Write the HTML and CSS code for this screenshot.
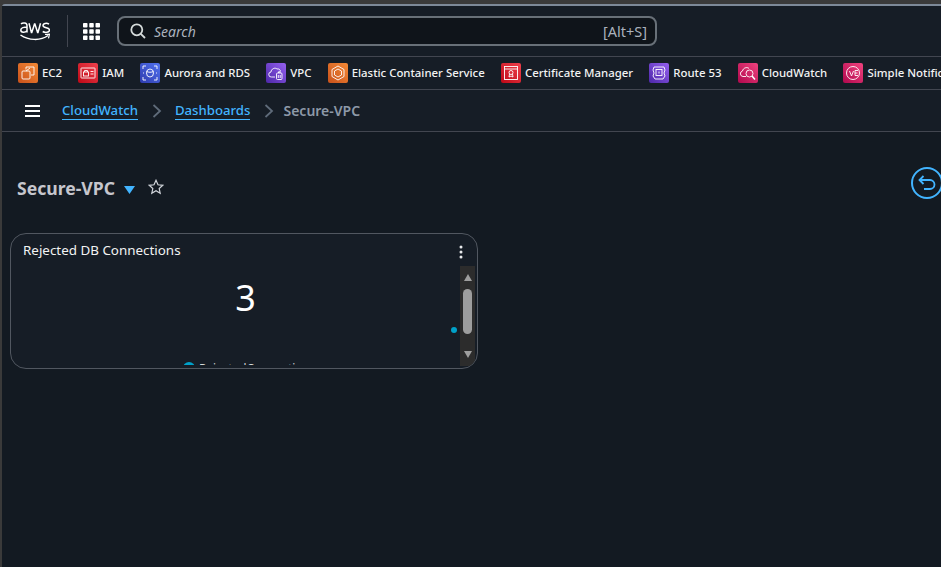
FILE: index.html
```html
<!DOCTYPE html>
<html lang="en">
<head>
    <meta charset="UTF-8">
    <meta name="viewport" content="width=device-width, initial-scale=1.0">
    <title>Secure-VPC | CloudWatch</title>
    <link rel="stylesheet" href="styles.css">
</head>
<body>
    <div class="shell">
        <header class="topbar">
            <svg class="aws-logo" width="30" height="19" viewBox="0 0 30 19" fill="none" stroke="#fff" stroke-width="1.500">
                <path d="M1 2c1.500-1.500 6-1.500 6 1.500v7M7 5.500C4 5 .8 5.500.8 8c0 3 4.500 2.800 6.200.8"/>
                <path d="M9 1.200l2.400 9.300h.4L14.500 2h.4l2.700 8.500h.4l2.500-9.300"/>
                <path d="M29 2.200C27 .8 23 1 23 3.500c0 3 6.500 1.500 6.500 4.500 0 3-4.800 2.800-6.800 1.500"/>
                <path d="M.5 13c8 5.500 20 6 27.500.5"/>
                <path d="M25 12.500l4.500-.4-1 4.300" stroke-width="1.200"/>
            </svg>
            <span class="divider"></span>
            <svg class="grid-icon" width="17" height="17" viewBox="0 0 17 17" fill="#fff">
                <rect width="4.500" height="4.500" rx=".8"/><rect x="6.250" width="4.500" height="4.500" rx=".8"/><rect x="12.500" width="4.500" height="4.500" rx=".8"/>
                <rect y="6.250" width="4.500" height="4.500" rx=".8"/><rect x="6.250" y="6.250" width="4.500" height="4.500" rx=".8"/><rect x="12.500" y="6.250" width="4.500" height="4.500" rx=".8"/>
                <rect y="12.500" width="4.500" height="4.500" rx=".8"/><rect x="6.250" y="12.500" width="4.500" height="4.500" rx=".8"/><rect x="12.500" y="12.500" width="4.500" height="4.500" rx=".8"/>
            </svg>
            <div class="search">
                <svg width="16" height="16" viewBox="0 0 16 16" fill="none" stroke="#d5dbdb" stroke-width="1.800">
                    <circle cx="6.800" cy="6.800" r="5.500"/><path d="M10.800 10.800L15 15"/>
                </svg>
                <span class="search-text">Search</span>
                <span class="search-key">[Alt+S]</span>
            </div>
        </header>

        <nav class="favorites">
            <a class="fav">
                <svg class="fav-icon orange" viewBox="0 0 20 20" fill="none" stroke="#fff" stroke-width=".9"><path d="M8 6.500V4h8v8h-3"/><rect x="4" y="8" width="8" height="8" rx="1"/><path d="M8 8l4-3"/></svg>
                EC2
            </a>
            <a class="fav">
                <svg class="fav-icon red" viewBox="0 0 20 20" fill="none" stroke="#fff" stroke-width=".9"><rect x="3" y="5" width="14" height="10" rx=".5"/><rect x="5.500" y="9" width="5" height="4"/><path d="M6.500 9V7.500h3V9M12.500 8.500h3M12.500 11h3"/></svg>
                IAM
            </a>
            <a class="fav">
                <svg class="fav-icon blue" viewBox="0 0 20 20" fill="none" stroke="#fff" stroke-width=".9"><ellipse cx="10" cy="10" rx="3.500" ry="4"/><path d="M6.500 8.500c2 1 5 1 7 0M3 3h3M3 3v3M17 3h-3M17 3v3M3 17h3M3 17v-3M17 17h-3M17 17v-3M3 10h1M16 10h1"/></svg>
                Aurora and RDS
            </a>
            <a class="fav">
                <svg class="fav-icon purple" viewBox="0 0 20 20" fill="none" stroke="#fff" stroke-width=".9"><path d="M9 14H5.500a2.500 2.500 0 0 1-.5-5c0-3 4-5 6-3 1.500-.5 3.500.5 3.500 2.500"/><rect x="10.500" y="10" width="5.500" height="6.500" rx="1"/><path d="M12.500 10V8.800h1.500V10M12.300 12v3M14.200 12v3"/></svg>
                VPC
            </a>
            <a class="fav">
                <svg class="fav-icon orange" viewBox="0 0 20 20" fill="none" stroke="#fff" stroke-width=".9"><path d="M10 3l6 3.500v7L10 17l-6-3.500v-7z"/><path d="M10 6l3.500 2v4L10 14l-3.500-2V8z"/></svg>
                Elastic Container Service
            </a>
            <a class="fav">
                <svg class="fav-icon red" viewBox="0 0 20 20" fill="none" stroke="#fff" stroke-width=".9"><rect x="3.500" y="3.500" width="13" height="13"/><path d="M3.500 6h13"/><circle cx="10" cy="9.500" r="2"/><path d="M8.500 11l-.5 3 2-1 2 1-.5-3"/></svg>
                Certificate Manager
            </a>
            <a class="fav">
                <svg class="fav-icon purple" viewBox="0 0 20 20" fill="none" stroke="#fff" stroke-width=".9"><path d="M5 4h10l1 3-1 3 1 3-2 3H6l-2-3 1-3-1-3z"/><rect x="7" y="6.500" width="6" height="6"/><path d="M10 8.500v2"/></svg>
                Route 53
            </a>
            <a class="fav">
                <svg class="fav-icon pink" viewBox="0 0 20 20" fill="none" stroke="#fff" stroke-width=".9"><path d="M8 13.500H5a2.800 2.800 0 0 1-.5-5.500c.5-3 4.500-4.500 6.500-2.500"/><circle cx="11.500" cy="10.500" r="3.500"/><path d="M14 13l3 3.500" stroke-width="1.500"/></svg>
                CloudWatch
            </a>
            <a class="fav">
                <svg class="fav-icon pink" viewBox="0 0 20 20" fill="none" stroke="#fff" stroke-width=".9"><circle cx="10" cy="10" r="6.500"/><path d="M6.500 8l2 5 2-5M12 7.500h3M12 7.500v5h3M12 10h2.500"/></svg>
                Simple Notification Service
            </a>
        </nav>

        <div class="crumbs">
            <svg class="menu-icon" width="15" height="12" viewBox="0 0 15 12" fill="#fff">
                <rect width="15" height="2"/><rect y="5" width="15" height="2"/><rect y="10" width="15" height="2"/>
            </svg>
            <a class="crumb-link">CloudWatch</a>
            <svg class="chevron" width="10" height="14" viewBox="0 0 10 14" fill="none" stroke="#5f6b7a" stroke-width="1.800"><path d="M1.500 1l6.500 6-6.500 6"/></svg>
            <a class="crumb-link">Dashboards</a>
            <svg class="chevron" width="10" height="14" viewBox="0 0 10 14" fill="none" stroke="#5f6b7a" stroke-width="1.800"><path d="M1.500 1l6.500 6-6.500 6"/></svg>
            <span class="crumb-current">Secure-VPC</span>
        </div>

        <main class="content">
            <div class="title-row">
                <h1 class="title">Secure-VPC</h1>
                <svg class="caret" width="11" height="8" viewBox="0 0 11 8" fill="#42b4ff"><path d="M0 0h11L5.500 8z"/></svg>
                <svg class="star" width="16" height="16" viewBox="0 0 16 16" fill="none" stroke="#d1d5db" stroke-width="1.200"><path d="M8 1.300l2 4.500 4.800.5-3.600 3.200 1 4.800L8 11.800l-4.200 2.500 1-4.800L1.200 6.300 6 5.800z"/></svg>
                <button class="back-btn">
                    <svg width="18" height="16" viewBox="0 0 18 16" fill="none" stroke="#42b4ff" stroke-width="1.800"><path d="M5.500 1L1.500 5l4 4M1.500 5H12a4.500 4.500 0 0 1 0 9H6"/></svg>
                </button>
            </div>

            <section class="widget">
                <div class="widget-main">
                    <h2 class="widget-title">Rejected DB Connections</h2>
                    <div class="widget-value">3</div>
                    <div class="legend"><span class="legend-dot"></span>RejectedConnections</div>
                </div>
                <div class="widget-side">
                    <svg class="more" width="4" height="14" viewBox="0 0 4 14" fill="#e9ebed"><circle cx="2" cy="2" r="1.500"/><circle cx="2" cy="7" r="1.500"/><circle cx="2" cy="12" r="1.500"/></svg>
                    <div class="scrollbar">
                        <span class="arrow-up"></span>
                        <span class="thumb"></span>
                        <span class="arrow-down"></span>
                    </div>
                </div>
                <span class="point"></span>
            </section>
        </main>
    </div>
</body>
</html>
```

FILE: styles.css
```css
html, body {
    height: 100%;
}
body {
    margin: 0;
    background-color: #3a3a3a;
    font-family: "Noto Sans", "Open Sans", sans-serif;
    overflow: hidden;
}
.shell {
    box-sizing: border-box;
    height: calc(100% - 4px);
    margin: 4px 0 0 2px;
    border-top: 2px solid #7d8998;
    background-color: #131a22;
    border-top-left-radius: 3px;
}

/* top bar */
.topbar {
    display: flex;
    align-items: center;
    height: 51px;
    box-sizing: border-box;
    background-color: #161d26;
    border-bottom: 1px solid #424650;
}
.aws-logo {
    margin-left: 18px;
    margin-top: 1px;
}
.divider {
    width: 1px;
    height: 32px;
    background-color: #424650;
    margin-left: 17px;
}
.grid-icon {
    margin-left: 15px;
}
.search {
    display: flex;
    align-items: center;
    width: 540px;
    height: 30px;
    box-sizing: border-box;
    margin-left: 17px;
    padding: 0 8px 0 11px;
    border: 2px solid #687078;
    border-radius: 8px;
    background-color: #0f141a;
    color: #aab2bd;
    font-size: 14px;
}
.search-text {
    margin-left: 8px;
    font-style: italic;
}
.search-key {
    margin-left: auto;
    font-size: 14.500px;
}

/* favorites */
.favorites {
    display: flex;
    align-items: center;
    height: 33px;
    box-sizing: border-box;
    background-color: #161d26;
    border-bottom: 1px solid #424650;
    padding: 0 0 1px 16px;
    white-space: nowrap;
    overflow: hidden;
}
.fav {
    display: flex;
    align-items: center;
    flex-shrink: 0;
    gap: 4px;
    margin-right: 16.200px;
    color: #f2f3f3;
    font-size: 11.400px;
    font-weight: 500;
}
.fav-icon {
    width: 20px;
    height: 20px;
    border-radius: 2px;
}
.orange { background: linear-gradient(45deg, #c8511b, #f58a36); }
.red { background: linear-gradient(45deg, #bd0816, #f0414d); }
.blue { background: linear-gradient(45deg, #2e3bad, #5273f0); }
.purple { background: linear-gradient(45deg, #4d27a8, #9560f0); }
.pink { background: linear-gradient(45deg, #b0084d, #f0437f); }

/* breadcrumbs */
.crumbs {
    display: flex;
    align-items: center;
    height: 42px;
    box-sizing: border-box;
    background-color: #161d26;
    border-bottom: 1px solid #424650;
    font-size: 13.200px;
}
.menu-icon {
    margin-left: 23px;
}
.crumb-link {
    margin-left: 22px;
    color: #42b4ff;
    border-bottom: 1px solid #42b4ff;
    line-height: 18px;
    font-weight: 500;
}
.crumb-link + .chevron {
    margin-left: 14px;
}
.chevron + .crumb-link {
    margin-left: 13px;
}
.crumb-current {
    margin-left: 9px;
    color: #8d99a8;
    font-size: 14px;
    font-weight: 600;
}

/* dashboard */
.content {
    padding: 0 0 0 8px;
}
.title-row {
    display: flex;
    align-items: center;
    height: 101px;
    box-sizing: border-box;
    padding: 10px 0 0 7px;
    color: #c6c6cd;
}
.title {
    margin: 0;
    font-size: 17.600px;
    font-weight: 700;
    color: #c6c6cd;
}
.caret {
    margin: 5px 0 0 9px;
}
.star {
    margin: -2px 0 0 13px;
}
.back-btn {
    display: flex;
    align-items: center;
    justify-content: center;
    width: 32px;
    height: 32px;
    padding: 0;
    margin: -9px -2px 0 auto;
    border: 2px solid #42b4ff;
    border-radius: 50%;
    background: none;
}
.widget {
    position: relative;
    display: flex;
    justify-content: space-between;
    width: 468px;
    height: 136px;
    box-sizing: border-box;
    overflow: hidden;
    background-color: #161d26;
    border: 1px solid #515760;
    border-radius: 16px;
}
.widget-main {
    flex: 1;
    height: 131px;
    box-sizing: border-box;
    padding: 7px 12px;
    min-width: 0;
    overflow: hidden;
}
.widget-title {
    margin: 0;
    font-size: 13.400px;
    font-weight: 400;
    line-height: 18px;
    color: #f2f3f3;
}
.widget-value {
    margin: 16px 0 0 0;
    padding-left: 20px;
    text-align: center;
    font-size: 36px;
    font-weight: 400;
    line-height: 46px;
    color: #fff;
}
.legend {
    display: flex;
    align-items: center;
    margin: 41px 0 0 160px;
    font-size: 11.800px;
    line-height: 12px;
    color: #d5dbdb;
    white-space: nowrap;
}
.legend-dot {
    width: 12px;
    height: 12px;
    margin-right: 4px;
    border-radius: 50%;
    background-color: #00a1c9;
}
.widget-side {
    display: flex;
    flex-direction: column;
    align-items: center;
    width: 15px;
    margin-right: 2px;
}
.more {
    margin: 11px 14px 7px 0;
    flex-shrink: 0;
}
.scrollbar {
    display: flex;
    flex-direction: column;
    align-items: center;
    flex-shrink: 0;
    width: 15px;
    height: 100px;
    background-color: #2c2c2c;
    padding-top: 8px;
    box-sizing: border-box;
}
.arrow-up,
.arrow-down {
    width: 0;
    height: 0;
    border-left: 4.500px solid transparent;
    border-right: 4.500px solid transparent;
}
.arrow-up {
    border-bottom: 7px solid #9e9e9e;
}
.arrow-down {
    border-top: 7px solid #9e9e9e;
    margin-top: 17px;
}
.thumb {
    width: 9px;
    height: 45px;
    margin-top: 8px;
    border-radius: 5px;
    background-color: #9e9e9e;
}
.point {
    position: absolute;
    left: 440px;
    top: 93px;
    width: 6px;
    height: 6px;
    border-radius: 50%;
    background-color: #00a1c9;
}
```
